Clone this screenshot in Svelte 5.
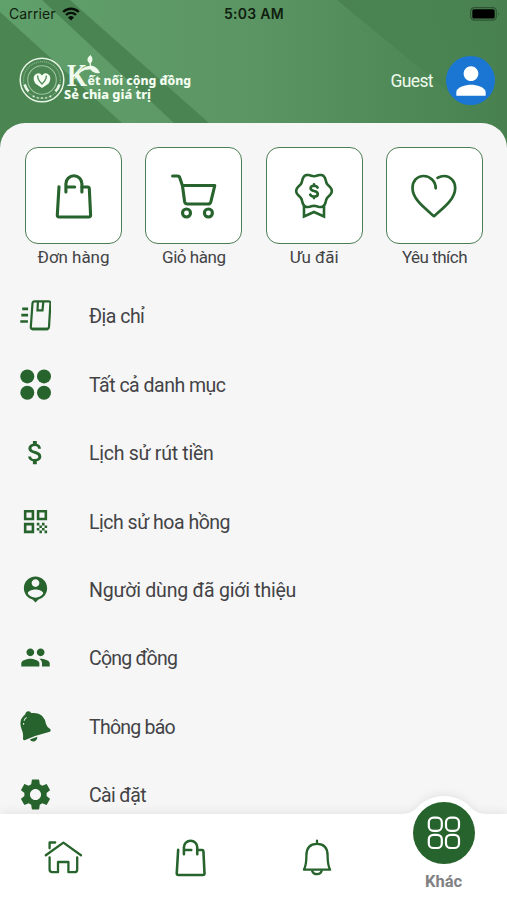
<script lang="ts">
	type Item = { label: string; icon: string; spacing: number };

	// spacing is the letter-spacing of the label in px
	const shortcuts: Item[] = [
		{ label: 'Đơn hàng', icon: 'bag', spacing: -0.05 },
		{ label: 'Giỏ hàng', icon: 'cart', spacing: -0.45 },
		{ label: 'Ưu đãi', icon: 'badge', spacing: -0.05 },
		{ label: 'Yêu thích', icon: 'heart', spacing: -0.5 }
	];

	const menu: Item[] = [
		{ label: 'Địa chỉ', icon: 'parcel', spacing: -0.52 },
		{ label: 'Tất cả danh mục', icon: 'dots', spacing: -0.5 },
		{ label: 'Lịch sử rút tiền', icon: 'dollar', spacing: -0.27 },
		{ label: 'Lịch sử hoa hồng', icon: 'qr', spacing: -0.49 },
		{ label: 'Người dùng đã giới thiệu', icon: 'pin', spacing: -0.22 },
		{ label: 'Cộng đồng', icon: 'people', spacing: -0.75 },
		{ label: 'Thông báo', icon: 'alarm', spacing: -0.75 },
		{ label: 'Cài đặt', icon: 'gear', spacing: -0.65 }
	];

	// Single-path glyphs on a 24 unit grid
	const glyphs: Record<string, string> = {
		dollar:
			'M11.8 10.9c-2.27-.59-3-1.2-3-2.15 0-1.09 1.01-1.85 2.7-1.85 1.78 0 2.44.85 2.5 2.1h2.21c-.07-1.72-1.12-3.3-3.21-3.81V3h-3v2.16c-1.94.42-3.5 1.68-3.5 3.61 0 2.31 1.91 3.46 4.7 4.13 2.5.6 3 1.48 3 2.41 0 .69-.49 1.79-2.7 1.79-2.06 0-2.87-.92-2.98-2.1h-2.2c.12 2.19 1.76 3.42 3.68 3.83V21h3v-2.15c1.95-.37 3.5-1.5 3.5-3.55 0-2.84-2.43-3.81-4.7-4.4z',
		qr: 'M3 11h8V3H3v8zm2-6h4v4H5V5zM3 21h8v-8H3v8zm2-6h4v4H5v-4zM13 3v8h8V3h-8zm6 6h-4V5h4v4zM19 19h2v2h-2zM13 13h2v2h-2zM15 15h2v2h-2zM13 17h2v2h-2zM15 19h2v2h-2zM17 17h2v2h-2zM17 13h2v2h-2zM19 15h2v2h-2z',
		pin: 'M12 2c-4.97 0-9 4.03-9 9 0 4.17 2.84 7.67 6.69 8.69L12 22l2.31-2.31C18.16 18.67 21 15.17 21 11c0-4.97-4.03-9-9-9zm0 2c1.66 0 3 1.34 3 3s-1.34 3-3 3-3-1.34-3-3 1.34-3 3-3zm0 14.3c-2.5 0-4.71-1.28-6-3.22.03-1.99 4-3.08 6-3.08 1.99 0 5.97 1.09 6 3.08-1.29 1.94-3.5 3.22-6 3.22z',
		people:
			'M16 11c1.66 0 2.99-1.34 2.99-3S17.66 5 16 5c-1.66 0-3 1.34-3 3s1.34 3 3 3zm-8 0c1.66 0 2.99-1.34 2.99-3S9.66 5 8 5C6.34 5 5 6.34 5 8s1.34 3 3 3zm0 2c-2.33 0-7 1.17-7 3.5V19h14v-2.5c0-2.33-4.67-3.5-7-3.5zm8 0c-.29 0-.62.02-.97.05 1.16.84 1.97 1.97 1.97 3.45V19h6v-2.5c0-2.33-4.67-3.5-7-3.5z',
		gear: 'M19.14 12.94c.04-.3.06-.61.06-.94 0-.32-.02-.64-.07-.94l2.03-1.58c.18-.14.23-.41.12-.61l-1.92-3.32c-.12-.22-.37-.29-.59-.22l-2.39.96c-.5-.38-1.03-.7-1.62-.94l-.36-2.54c-.04-.24-.24-.41-.48-.41h-3.84c-.24 0-.43.17-.47.41l-.36 2.54c-.59.24-1.13.57-1.62.94l-2.39-.96c-.22-.08-.47 0-.59.22L2.74 8.87c-.12.21-.08.47.12.61l2.03 1.58c-.05.3-.09.63-.09.94s.02.64.07.94l-2.03 1.58c-.18.14-.23.41-.12.61l1.92 3.32c.12.22.37.29.59.22l2.39-.96c.5.38 1.03.7 1.62.94l.36 2.54c.05.24.24.41.48.41h3.84c.24 0 .44-.17.47-.41l.36-2.54c.59-.24 1.13-.56 1.62-.94l2.39.96c.22.08.47 0 .59-.22l1.92-3.32c.12-.22.07-.47-.12-.61l-2.01-1.58zM12 15.6c-1.98 0-3.6-1.62-3.6-3.6s1.62-3.6 3.6-3.6 3.6 1.62 3.6 3.6-1.62 3.6-3.6 3.6z'
	};

	// Six-lobed rosette outline
	function rosette(cx: number, cy: number): string {
		const pts: string[] = [];
		for (let i = 0; i < 72; i++) {
			const a = (i / 72) * Math.PI * 2;
			const r = 16.3 + 1.5 * Math.cos(6 * a);
			pts.push(`${(cx + r * Math.cos(a)).toFixed(2)},${(cy + r * Math.sin(a)).toFixed(2)}`);
		}
		return pts.join(' ');
	}
</script>

{#snippet bag()}
	<path d="M9 14.7 L7.3 43 Q7.2 45 9.2 45 H38.7 Q40.7 45 40.6 43 L39.3 16.5 Q39.2 15 37.7 15 H32" />
	<path d="M15.9 20 V11.8 a8 8 0 0 1 16 0 V20 M15.9 15 H24.7" />
{/snippet}

<div class="screen">
	<header class="header">
		<svg class="header-bg" viewBox="0 0 507 160" preserveAspectRatio="none">
			<defs>
				<linearGradient id="base" x1="0" x2="1" y1="0" y2="0">
					<stop offset="0" stop-color="#60a06b" />
					<stop offset="0.5" stop-color="#5b9564" />
					<stop offset="0.85" stop-color="#4d8756" />
					<stop offset="1" stop-color="#48824f" />
				</linearGradient>
				<linearGradient id="shade" x1="0" x2="1" y1="0" y2="0.4">
					<stop offset="0" stop-color="#48804f" stop-opacity="0.85" />
					<stop offset="1" stop-color="#48804f" stop-opacity="0.3" />
				</linearGradient>
			</defs>
			<rect width="507" height="160" fill="url(#base)" />
			<path d="M0 12 L122 123 V160 H0 Z" fill="#4a8552" />
			<path d="M42 0 H70 L209 123 H174 Z" fill="#4b8453" />
			<path d="M337 0 H507 V140 Z" fill="url(#shade)" />
		</svg>

		<div class="status">
			<span class="carrier">
				Carrier
				<svg width="18" height="14" viewBox="0 0 18 14">
					<path d="M1.2 5 A11 11 0 0 1 16.8 5" />
					<path d="M4 8 A7 7 0 0 1 14 8" />
					<path class="dot" d="M9 13.4 L6 10.4 A4.3 4.3 0 0 1 12 10.4 Z" />
				</svg>
			</span>
			<span class="time">5:03 AM</span>
			<svg class="battery" width="31" height="14" viewBox="0 0 31 14">
				<rect x="0.7" y="0.7" width="25.6" height="12.4" rx="3.6" fill="none" stroke="#2f5335" stroke-width="1.2" />
				<rect x="2.3" y="2.3" width="22.4" height="9.2" rx="1.6" />
				<path d="M28 5 Q29.6 6.9 28 8.8 Z" fill="#2f5335" />
			</svg>
		</div>

		<div class="brand">
			<svg class="logo" width="176" height="52" viewBox="0 0 176 52">
				<g fill="none" stroke="#e6f5e4">
					<circle cx="23" cy="26" r="21.8" stroke-width="1.5" />
					<circle cx="23" cy="26" r="18.4" stroke-width="1.3" stroke-dasharray="1.1 0.9" opacity="0.4" />
					<circle cx="23" cy="26" r="14.3" stroke-width="1.1" opacity="0.55" />
					<path d="M5.6 30.5 Q7 35 9.6 37.4 M40.4 30.5 Q39 35 36.4 37.4" stroke-width="2.6" />
					<path d="M14 42 l1.4 .8 M18.3 43.6 l1.2 .2 M22.4 44 h1.2 M26.5 43.8 l1.2 -.2 M30.6 42.8 l1.4 -.8" stroke-width="1.8" />
				</g>
				<path d="M23 34 L16.6 29.8 Q13.6 25.6 15.4 21.6 Q19.6 17 23 21.4 Q26.4 17 30.6 21.6 Q32.4 25.6 29.4 29.8 Z" fill="#f5fff2" />
				<path d="M18.6 21.5 Q18.6 26 23 30 Q27.4 26 27.4 21.5" fill="none" stroke="#578f5f" stroke-width="1.4" />
				<text class="initial" x="48" y="32" textLength="20" lengthAdjust="spacingAndGlyphs">K</text>
				<path d="M55 25 Q60 12.5 72 11.5 Q78 12 81 19 Q75.5 20.4 71.5 15.6 Q62 14.5 56 25 Z" fill="#f0fbed" />
				<path d="M70.5 9.5 Q65.5 5.5 71.5 1 Q75.5 5.5 71.8 9.5 L72 12.5 H71 Z" fill="#f0fbed" />
				<text class="tagline" x="68.5" y="31" textLength="103.5" lengthAdjust="spacingAndGlyphs">ết nối cộng đồng</text>
				<text class="tagline" x="45" y="45.3" textLength="87" lengthAdjust="spacingAndGlyphs">Sẻ chia giá trị</text>
			</svg>
			<div class="account">
				<span class="guest">Guest</span>
				<div class="avatar">
					<svg width="44" height="44" viewBox="0 0 24 24">
						<path fill="#fff" d="M12 12c2.21 0 4-1.79 4-4s-1.79-4-4-4-4 1.79-4 4 1.79 4 4 4zm0 2c-2.67 0-8 1.34-8 4v2h16v-2c0-2.66-5.33-4-8-4z" />
					</svg>
				</div>
			</div>
		</div>
	</header>

	<main class="sheet">
		<div class="shortcuts">
			{#each shortcuts as item}
				<div class="shortcut">
					<div class="tile">
						<svg class="line" width="48" height="48" viewBox="0 0 48 48">
							{#if item.icon === 'bag'}
								{@render bag()}
							{:else if item.icon === 'cart'}
								<path d="M2.6 4 H7.5 Q9.4 4 9.9 6 L12.5 14 L14.6 29.5 Q15 32 17.5 32 H38 Q40.2 32 40.8 29.8 L44.8 13.5 H12.5" />
								<circle cx="16.5" cy="41" r="4" />
								<circle cx="38.4" cy="41" r="4" />
							{:else if item.icon === 'badge'}
								<g stroke-width="2.6">
									<polygon points={rosette(24, 19)} />
									<path d="M14 33.5 V44.5 L24 40 L34 44.5 V33.5" stroke-linejoin="miter" />
									<path d="M27.6 15.6 Q26.8 13.8 24 13.8 Q20.6 13.8 20.6 16.3 Q20.6 18.4 24 19 Q27.8 19.6 27.8 22 Q27.8 24.6 24 24.6 Q21 24.6 20.2 22.6 M24 12.4 V14 M24 24.6 V26.1" />
								</g>
							{:else}
								<path stroke-width="2.7" d="M25.7 16.3 C25.7 9 20 4 13.7 4 C7 4 2.5 9 2.5 16 C2.5 27 14 35.5 24 44.2 C34 35.5 45.2 27 45.2 16 C45.2 9 40 4 34.5 4 Q30.5 4 27.5 5.8" />
							{/if}
						</svg>
					</div>
					<span class="tile-label" style:letter-spacing="{item.spacing}px">{item.label}</span>
				</div>
			{/each}
		</div>

		<ul class="menu">
			{#each menu as item}
				<li>
					{#if item.icon === 'parcel'}
						<svg width="31" height="31" viewBox="0.5 0.5 31 31" fill="none" stroke="#27632c" stroke-width="2.2">
							<path d="M15.2 1.8 H29 Q31 1.8 30.9 3.8 L29.5 27.5 Q29.3 29.6 27.3 29.6 H13.2 Q11.2 29.6 11.3 27.6 L13 3.8 Q13.2 1.8 15.2 1.8 Z" />
							<path d="M12.4 29.4 H28.4" stroke-width="2.7" />
							<path d="M18.4 2.5 L18 10.9 H23 L23.8 2.5" />
							<path d="M2.7 9.4 H8.6 M1.8 15.7 H8.6 M0.8 22 H8.4" stroke-width="2.7" />
						</svg>
					{:else if item.icon === 'dots'}
						<svg width="31" height="31" viewBox="0 0 31 31">
							<circle cx="7.3" cy="7.4" r="7" />
							<circle cx="24" cy="7.4" r="7" />
							<circle cx="7.3" cy="23.8" r="7" />
							<circle cx="24" cy="23.8" r="7" />
						</svg>
					{:else if item.icon === 'alarm'}
						<svg width="31" height="31" viewBox="0 0 31 31">
							<path d="M5.3 3.2 Q5.5 0.6 8.3 0.3 Q10.6 0.2 11.2 2.1 Q18 1.2 22.4 5.2 Q25.6 8.6 26 13 Q27 16.6 30.2 18 Q31.4 19.6 29.8 20.8 Q16 24.2 4.6 29.2 Q2.6 29.4 3 27.2 Q3.6 22.6 1.6 18.2 Q-2 9 5.3 3.2 Z" />
							<path d="M9.8 28.4 L17.3 25.8 Q17.4 29.4 14 30.4 Q11.4 30.8 9.8 28.4 Z" />
							<path d="M3.6 13.8 V12 M4 9.8 Q4.8 7.6 6.6 6.4" fill="none" stroke="#dcebdc" stroke-width="1.1" />
						</svg>
					{:else}
						<svg width="31" height="31" viewBox={item.icon === 'gear' ? '2 2 20 20' : '0 0 24 24'}>
							<path d={glyphs[item.icon]} />
						</svg>
					{/if}
					<span style:letter-spacing="{item.spacing}px">{item.label}</span>
				</li>
			{/each}
		</ul>
	</main>

	<nav class="tabs">
		<svg class="tabs-bg" viewBox="0 0 507 110">
			<path d="M0 24 H402 Q409 24 415.3 19.5 A37.2 37.2 0 0 1 472.7 19.5 Q479 24 486 24 H507 V110 H0 Z" />
		</svg>
		<div class="tab">
			<svg class="line thin" width="40" height="40" viewBox="0 0 40 40">
				<path d="M2.8 17.3 L20.4 4.6 L38 17.3 M6.6 10.3 V4.5 H12.2" />
				<path d="M6.6 19.3 V31.6 Q6.6 34.2 9.2 34.2 H15 V24 H25.4 V34.2 H31.4 Q34.2 34.2 34.2 31.4 V19.3" />
			</svg>
		</div>
		<div class="tab">
			<svg class="line" width="40" height="40" viewBox="-0.8 0.6 48 48">{@render bag()}</svg>
		</div>
		<div class="tab">
			<svg class="line thin" width="40" height="40" viewBox="0 0 40 40">
				<path d="M20 2.6 V5.5 M6.9 31.7 Q9.4 27 9.4 17.5 C9.4 9 13.5 5.8 20 5.8 C26.5 5.8 30.6 9 30.6 17.5 Q30.6 27 33.1 31.7 Z" />
				<path d="M15.2 33.2 Q16.5 36.2 20 36.2 Q23.5 36.2 24.6 33.2" />
			</svg>
		</div>
		<div class="tab active">
			<div class="bubble">
				<svg width="34" height="34" viewBox="0 0 34 34" fill="none" stroke="#fff" stroke-width="2.2">
					<rect x="1.8" y="1.6" width="13" height="13.2" rx="4.6" />
					<rect x="19" y="1.6" width="13" height="13.2" rx="4.6" />
					<rect x="1.8" y="18.8" width="13" height="13.2" rx="4.6" />
					<rect x="19" y="18.8" width="13" height="13.2" rx="4.6" />
				</svg>
			</div>
			<span>Khác</span>
		</div>
	</nav>
</div>

<style>
	:global(body) {
		margin: 0;
	}
	.screen {
		position: relative;
		width: 507px;
		height: 900px;
		overflow: hidden;
		background: #f6f6f6;
		font-family: Roboto, 'Noto Sans', sans-serif;
		color: #434346;
	}
	svg {
		display: block;
		flex: none;
	}
	.header {
		position: relative;
		height: 123px;
	}
	.header-bg {
		position: absolute;
		top: 0;
		left: 0;
		width: 507px;
		height: 160px;
	}
	.status {
		position: relative;
		display: grid;
		grid-template-columns: 1fr auto 1fr;
		align-items: center;
		height: 27px;
		padding: 0 6px 0 9px;
		font-family: Inter, 'Liberation Sans', sans-serif;
		font-size: 14px;
		color: #10200f;
	}
	.carrier {
		display: flex;
		align-items: center;
		gap: 6px;
		letter-spacing: 0.1px;
	}
	.carrier path {
		fill: none;
		stroke: #061006;
		stroke-width: 2.4;
	}
	.carrier .dot {
		fill: #061006;
		stroke: none;
	}
	.time {
		margin-right: 2px;
		font-weight: 600;
		letter-spacing: 0.3px;
	}
	.battery {
		justify-self: end;
	}
	.brand {
		position: relative;
		display: flex;
		justify-content: space-between;
		padding: 27px 12px 0 19px;
	}
	.logo {
		overflow: visible;
	}
	.initial {
		font-family: 'Liberation Serif', serif;
		font-size: 31px;
		font-weight: 700;
		fill: #f0fbed;
	}
	.tagline {
		font-family: 'Noto Sans', sans-serif;
		font-size: 13px;
		font-weight: 800;
		fill: #f3fdf0;
	}
	.account {
		display: flex;
		align-items: center;
		gap: 13px;
		height: 53px;
	}
	.guest {
		font-size: 17.5px;
		letter-spacing: -0.6px;
		color: #f0fbed;
	}
	.avatar {
		display: grid;
		place-items: center;
		width: 49px;
		height: 49px;
		border-radius: 50%;
		background: #1b76d3;
	}
	.sheet {
		position: relative;
		height: 777px;
		border-radius: 25px 25px 0 0;
		background: #f6f6f6;
	}
	.shortcuts {
		display: flex;
		justify-content: space-between;
		padding: 24px 24px 0 25px;
	}
	.shortcut {
		display: flex;
		flex-direction: column;
		align-items: center;
		width: 97px;
	}
	.tile {
		display: grid;
		place-items: center;
		box-sizing: border-box;
		width: 97px;
		height: 97px;
		border: 1px solid #4c7d54;
		border-radius: 13px;
		background: #fff;
	}
	.line {
		fill: none;
		stroke: #27632c;
		stroke-width: 3.1;
		stroke-linecap: round;
		stroke-linejoin: round;
	}
	.line.thin {
		stroke-width: 2.3;
	}
	.tile-label {
		margin-top: 2px;
		font-size: 17px;
		line-height: 22px;
		white-space: nowrap;
	}
	.menu {
		list-style: none;
		margin: 13.5px 0 0;
		padding: 0 20px;
	}
	.menu li {
		display: flex;
		align-items: center;
		gap: 38px;
		height: 68.45px;
		fill: #27632c;
		font-size: 19.5px;
	}
	.menu span {
		padding-top: 2px;
	}
	.tabs {
		position: absolute;
		left: 0;
		bottom: 0;
		display: grid;
		grid-template-columns: repeat(4, 1fr);
		width: 507px;
		height: 86px;
	}
	.tabs-bg {
		position: absolute;
		left: 0;
		bottom: 0;
		width: 507px;
		height: 110px;
		fill: #fff;
		overflow: visible;
		filter: drop-shadow(0 -2px 4px rgba(0, 0, 0, 0.07));
	}
	.tab {
		position: relative;
		display: flex;
		flex-direction: column;
		align-items: center;
		padding-top: 24px;
	}
	.tab.active {
		padding: 0;
		margin-top: -12px;
		font-size: 16.5px;
		font-weight: 700;
		color: #818183;
	}
	.bubble {
		display: grid;
		place-items: center;
		width: 62px;
		height: 62px;
		margin-bottom: 8px;
		border-radius: 50%;
		background: #27632c;
	}
</style>
